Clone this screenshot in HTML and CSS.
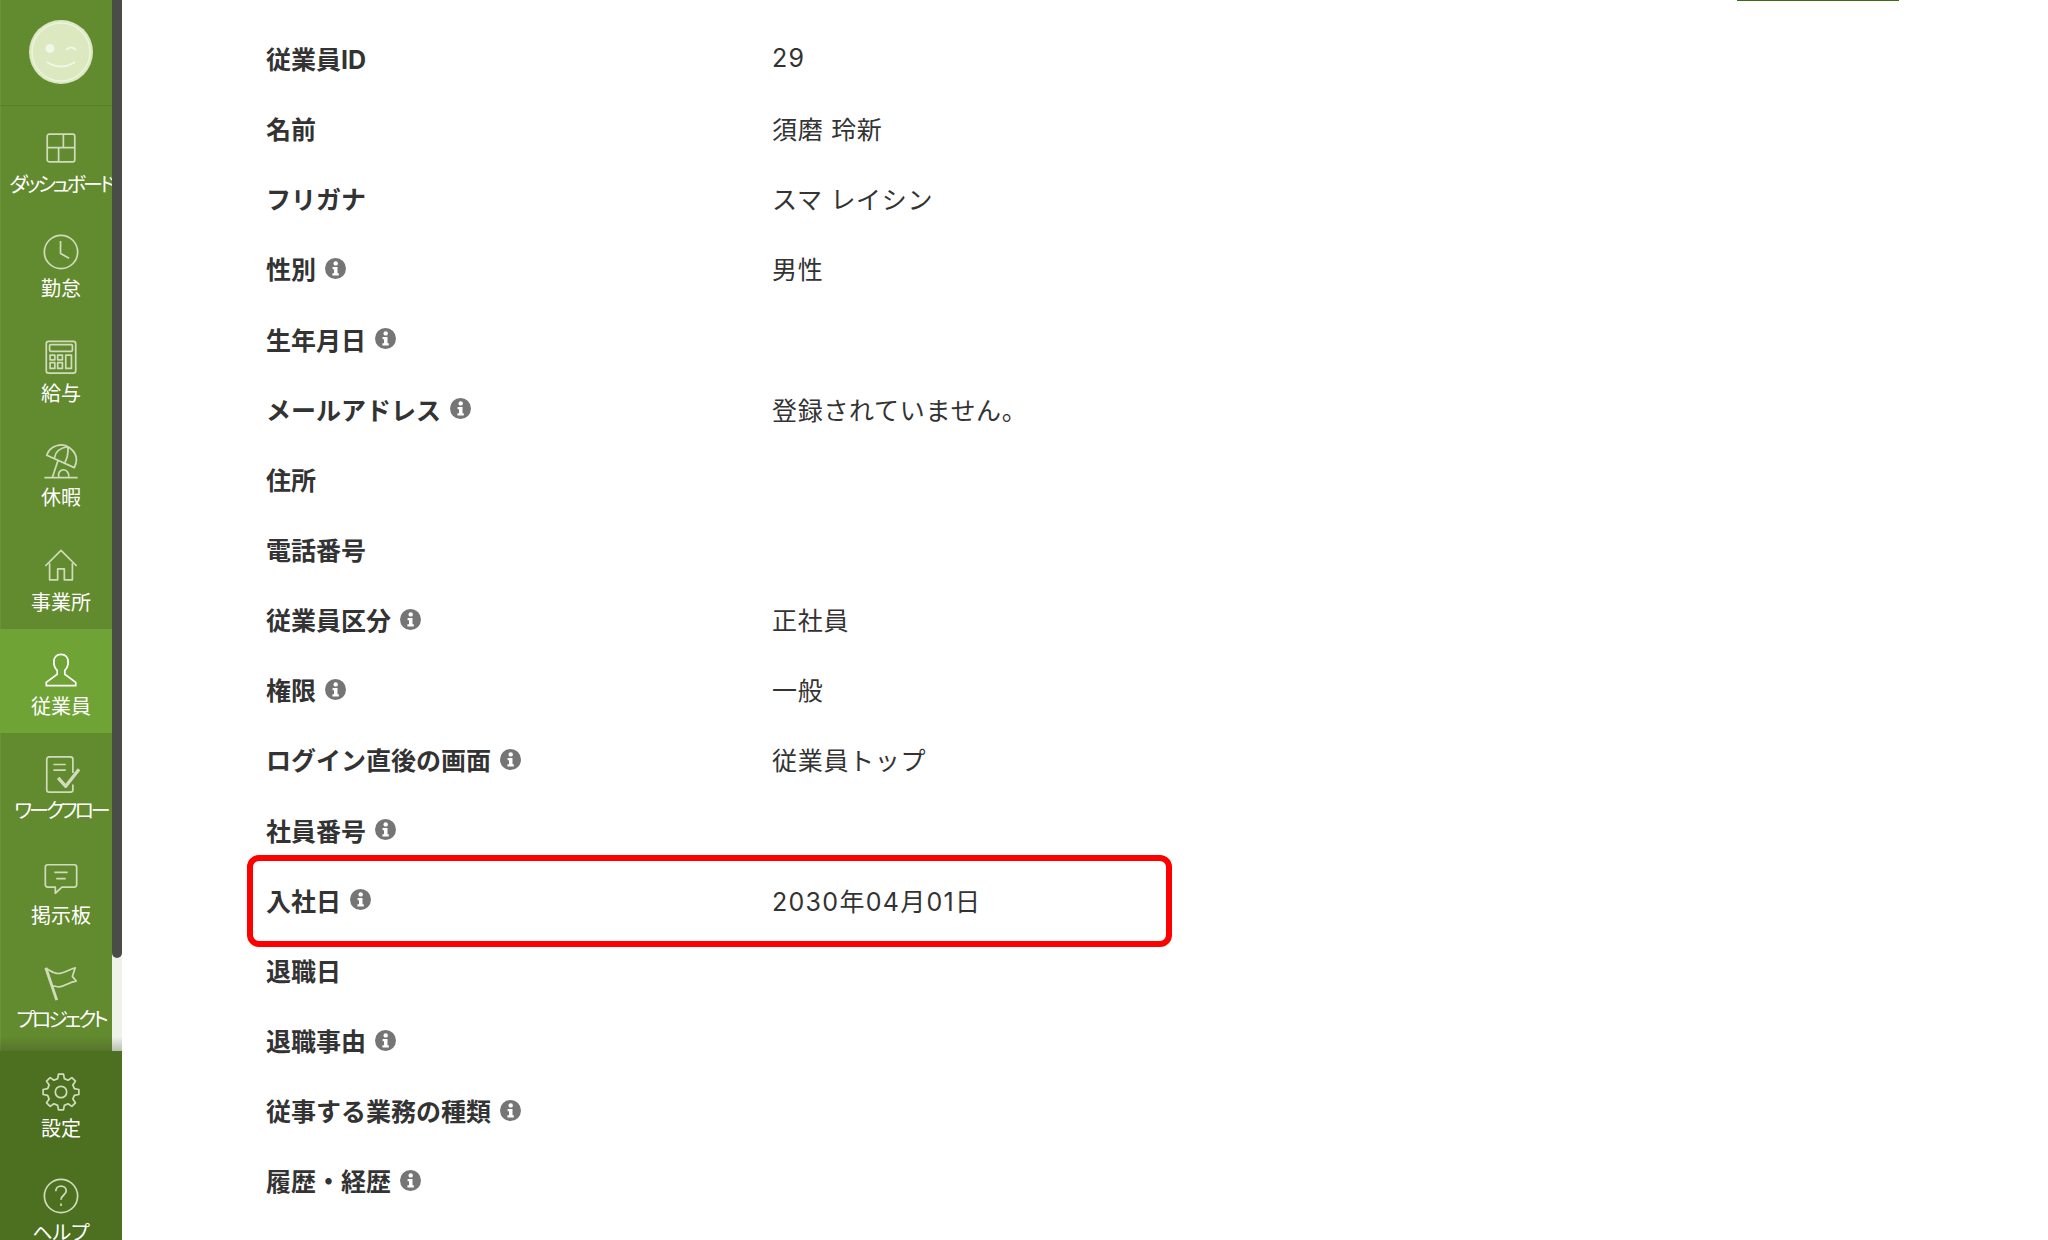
FILE: index.html
```html
<!DOCTYPE html>
<html lang="ja">
<head>
    <meta charset="UTF-8">
    <meta name="viewport" content="width=device-width, initial-scale=1.0">
    <title>従業員</title>
    <link rel="stylesheet" href="styles.css">
</head>
<body>
    <svg class="icon-defs" width="0" height="0">
        <symbol id="info" viewBox="0 0 21 21">
            <circle cx="10.5" cy="10.5" r="10.5" fill="#757575"/>
            <circle cx="10.7" cy="5.4" r="2.2" fill="#fff"/>
            <path d="M7.6 9h4.9v6.3h1.3v2.2H7.4v-2.2h1.6v-4.1H7.6z" fill="#fff"/>
        </symbol>
    </svg>

    <aside class="sidebar">
        <div class="sidebar-scroll">
            <nav class="side-nav">
                <div class="avatar-box">
                    <svg class="avatar" width="66" height="66" viewBox="0 0 66 66">
                        <circle cx="33" cy="33" r="32" fill="#dce8c0"/>
                        <circle cx="33" cy="33" r="29" fill="none" stroke="#edf3e0" stroke-width="1.5"/>
                        <circle cx="22" cy="29.500" r="4.500" fill="#f1f6e6"/>
                        <path d="M38 31q5-5 10 0" fill="none" stroke="#f1f6e6" stroke-width="2"/>
                        <path d="M19 43q14 9 28 0" fill="none" stroke="#f1f6e6" stroke-width="2"/>
                    </svg>
                </div>
                <a class="nav-item" href="#">
                    <svg class="nav-icon" viewBox="0 0 40 40"><path d="M7.500 5.500h25a2 2 0 0 1 2 2v25a2 2 0 0 1-2 2h-25a2 2 0 0 1-2-2v-25a2 2 0 0 1 2-2zM5.500 19.500h29M22.500 5.500v14M17.500 19.500v15"/></svg>
                    <span class="tight">ダッシュボード</span>
                </a>
                <a class="nav-item" href="#">
                    <svg class="nav-icon" viewBox="0 0 40 40"><circle cx="20" cy="20" r="17.500"/><path d="M19.500 8.500v13l9 5"/></svg>
                    <span>勤怠</span>
                </a>
                <a class="nav-item" href="#">
                    <svg class="nav-icon" viewBox="0 0 40 40"><rect x="4.500" y="3.500" width="31" height="33.500" rx="2.500"/><rect x="8" y="7" width="24" height="7" rx="1"/><path d="M8.500 18h5v5h-5zM16.500 18h5v5h-5zM8.500 26h5v6h-5zM16.500 26h5v6h-5zM25 18h6v14h-6z"/></svg>
                    <span>給与</span>
                </a>
                <a class="nav-item" href="#">
                    <svg class="nav-icon" viewBox="0 0 40 40"><path d="M5 14c3-10 16-14 24-8s9 13 5 21zM13 17c1-7 7-11 14-12M24 22c3-6 4-12 3-17M17 19l-6 18M2.500 37.500h35"/><path d="M18 37a5 5 0 0 1 9-5 5 5 0 0 1 1 5"/></svg>
                    <span>休暇</span>
                </a>
                <a class="nav-item" href="#">
                    <svg class="nav-icon" viewBox="0 0 40 40"><path d="M3.500 20L20 3.500 36.500 20M8 17v17.500h8.500V23h7v11.500H32V17"/></svg>
                    <span>事業所</span>
                </a>
                <a class="nav-item active" href="#">
                    <svg class="nav-icon" viewBox="0 0 40 40"><path d="M20 3.500c-5 0-7.500 3.500-7.500 8 0 4 1.500 7 3.500 9v4L4.500 33v3.500h31V33L24 24.500v-4c2-2 3.500-5 3.500-9 0-4.500-2.500-8-7.500-8z"/></svg>
                    <span>従業員</span>
                </a>
                <a class="nav-item" href="#">
                    <svg class="nav-icon" viewBox="0 0 40 40"><path d="M32.500 19V4.500A2.500 2.500 0 0 0 30 2H7.500A2.500 2.500 0 0 0 5 4.500v32A2.500 2.500 0 0 0 7.500 39H30a2.500 2.500 0 0 0 2.500-2.500V31M12 10h13M12 16h13"/><path class="check" d="M17 24l8 9L39 15"/></svg>
                    <span class="tight">ワークフロー</span>
                </a>
                <a class="nav-item" href="#">
                    <svg class="nav-icon" viewBox="0 0 40 40"><path d="M6 5h28a2.500 2.500 0 0 1 2.500 2.500V26a2.500 2.500 0 0 1-2.500 2.500H21L14 35v-6.500H6A2.500 2.500 0 0 1 3.500 26V7.500A2.500 2.500 0 0 1 6 5zM13 13h14M15 19.500h10"/></svg>
                    <span>掲示板</span>
                </a>
                <a class="nav-item" href="#">
                    <svg class="nav-icon" viewBox="0 0 40 40"><path class="pole" d="M4 4l11.500 34"/><path d="M5 5c4 2 7 5 12 5 7 0 12-5 18-6l-3 9 4 5c-8 1-12 6-18 6-3 0-5-1-7-1"/></svg>
                    <span class="tight">プロジェクト</span>
                </a>
            </nav>
            <div class="scrollbar"><div class="scroll-thumb"></div></div>
            <div class="scroll-fade"></div>
        </div>
        <div class="sidebar-foot">
            <a class="nav-item" href="#">
                <svg class="nav-icon" viewBox="0 0 40 40"><circle cx="20" cy="20" r="6"/><path d="M16.490 5.930L17.360 1.180H22.640L23.510 5.930L27.470 7.570L31.430 4.820L35.180 8.570L32.430 12.530L34.070 16.490L38.820 17.360V22.640L34.070 23.510L32.430 27.470L35.180 31.430L31.430 35.180L27.470 32.430L23.510 34.070L22.640 38.820H17.360L16.490 34.070L12.530 32.430L8.570 35.180L4.820 31.430L7.570 27.470L5.930 23.510L1.180 22.640V17.360L5.930 16.490L7.570 12.530L4.820 8.570L8.570 4.820L12.530 7.570Z"/></svg>
                <span>設定</span>
            </a>
            <a class="nav-item" href="#">
                <svg class="nav-icon" viewBox="0 0 40 40"><circle cx="20" cy="20" r="17.500"/><path d="M14.500 15c0-3.500 2.500-5.500 5.500-5.500s5.500 2 5.500 5c0 4.500-5.500 4.500-5.500 9.500M20 28v2.500"/></svg>
                <span>ヘルプ</span>
            </a>
        </div>
    </aside>

    <main class="content">
        <div class="top-button-edge"></div>
        <dl class="detail-list">
            <div class="detail-row"><dt>従業員ID</dt><dd class="num">29</dd></div>
            <div class="detail-row"><dt>名前</dt><dd>須磨 玲新</dd></div>
            <div class="detail-row"><dt>フリガナ</dt><dd>スマ レイシン</dd></div>
            <div class="detail-row"><dt>性別<svg class="info"><use href="#info"/></svg></dt><dd>男性</dd></div>
            <div class="detail-row"><dt>生年月日<svg class="info"><use href="#info"/></svg></dt><dd></dd></div>
            <div class="detail-row"><dt>メールアドレス<svg class="info"><use href="#info"/></svg></dt><dd>登録されていません。</dd></div>
            <div class="detail-row"><dt>住所</dt><dd></dd></div>
            <div class="detail-row"><dt>電話番号</dt><dd></dd></div>
            <div class="detail-row"><dt>従業員区分<svg class="info"><use href="#info"/></svg></dt><dd>正社員</dd></div>
            <div class="detail-row"><dt>権限<svg class="info"><use href="#info"/></svg></dt><dd>一般</dd></div>
            <div class="detail-row"><dt>ログイン直後の画面<svg class="info"><use href="#info"/></svg></dt><dd>従業員トップ</dd></div>
            <div class="detail-row"><dt>社員番号<svg class="info"><use href="#info"/></svg></dt><dd></dd></div>
            <div class="detail-row highlighted"><dt>入社日<svg class="info"><use href="#info"/></svg></dt><dd class="num">2030年04月01日</dd></div>
            <div class="detail-row"><dt>退職日</dt><dd></dd></div>
            <div class="detail-row"><dt>退職事由<svg class="info"><use href="#info"/></svg></dt><dd></dd></div>
            <div class="detail-row"><dt>従事する業務の種類<svg class="info"><use href="#info"/></svg></dt><dd></dd></div>
            <div class="detail-row"><dt>履歴・経歴<svg class="info"><use href="#info"/></svg></dt><dd></dd></div>
        </dl>
    </main>
</body>
</html>
```

FILE: styles.css
```css
html, body {
    height: 100%;
}

body {
    display: flex;
    margin: 0;
    height: 1240px;
    overflow: hidden;
    background-color: #fff;
    color: #333;
    font-family: Inter, "Noto Sans CJK JP", sans-serif;
}

.icon-defs {
    position: absolute;
}

/* sidebar */
.sidebar {
    display: flex;
    flex-direction: column;
    flex: none;
    width: 122px;
    height: 1240px;
    overflow: hidden;
}

.sidebar-scroll {
    position: relative;
    display: flex;
    flex: none;
    height: 1051px;
    overflow: hidden;
}

.side-nav {
    flex: none;
    width: 112px;
    background-color: #628a2e;
    box-shadow: inset 1px 0 rgba(255, 255, 255, 0.08);
}

.avatar-box {
    display: flex;
    justify-content: center;
    height: 106px;
    padding: 19px 0 0 10px;
    box-sizing: border-box;
    border-bottom: 1px solid #57802a;
    margin-bottom: 1px;
}

.nav-item {
    display: flex;
    flex-direction: column;
    align-items: center;
    height: 104.4px;
    padding: 22px 0 0 10px;
    box-sizing: border-box;
    color: #fff;
    font-size: 20px;
    line-height: 26px;
    text-decoration: none;
    white-space: nowrap;
    overflow: hidden;
    font-feature-settings: "palt";
}

.nav-item .tight {
    letter-spacing: -3px;
}

.nav-item.active {
    background-color: #70a335;
}

.nav-icon {
    flex: none;
    width: 38px;
    height: 38px;
    margin-bottom: 5px;
    fill: none;
    stroke: #d0dcbc;
    stroke-width: 1.8;
    stroke-linejoin: round;
}

.nav-item.active .nav-icon {
    stroke: #fff;
}

.nav-icon .check {
    stroke-width: 3.500;
}

.nav-icon .pole {
    stroke-width: 3;
}

.scrollbar {
    flex: none;
    width: 10px;
    background-color: #eef2ea;
}

.scroll-thumb {
    height: 958px;
    border-radius: 0 0 5px 5px;
    background-color: #4a4c48;
}

.scroll-fade {
    position: absolute;
    left: 0;
    right: 0;
    bottom: 0;
    height: 14px;
    background: linear-gradient(rgba(60, 70, 40, 0), rgba(60, 70, 40, 0.3));
}

.sidebar-foot {
    flex: 1;
    background-color: #4c7020;
}

.sidebar-foot .nav-item {
    padding-left: 0;
}

/* main content */
.content {
    position: relative;
    flex: 1;
    padding: 23px 0 0 144px;
}

.top-button-edge {
    position: absolute;
    top: 0;
    left: 1615px;
    width: 162px;
    height: 1px;
    background-color: #3f6b10;
}

.detail-list {
    margin: 0;
}

.detail-row {
    position: relative;
    display: flex;
    align-items: center;
    height: 70.15px;
    font-size: 25px;
}

.detail-row dt {
    display: flex;
    align-items: center;
    flex: none;
    width: 506px;
    font-weight: 700;
}

.detail-row dd {
    margin: 0;
    letter-spacing: 0.7px;
}

.detail-row dd.num {
    letter-spacing: 1.3px;
}

.info {
    flex: none;
    width: 21px;
    height: 21px;
    margin-left: 9px;
}

.highlighted::after {
    content: "";
    position: absolute;
    left: -19px;
    top: -10px;
    width: 925px;
    height: 92px;
    box-sizing: border-box;
    border: 6px solid #f00;
    border-radius: 12px;
}
```
